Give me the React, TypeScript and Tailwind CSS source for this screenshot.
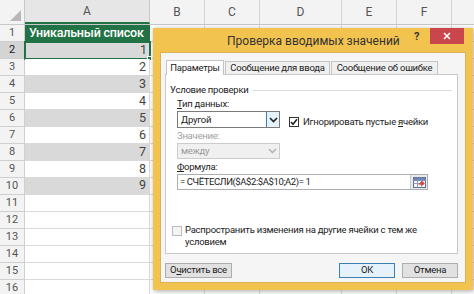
import React from "react";

const rowNums = Array.from({ length: 16 }, (_, i) => i + 1);

const rightCols = [
  { name: "B", cls: "w-[55px]" },
  { name: "C", cls: "w-[55px]" },
  { name: "D", cls: "w-[82px]" },
  { name: "E", cls: "w-[55px]" },
  { name: "F", cls: "w-[55px]" },
  { name: "", cls: "w-[55px]" },
];

function Chevron({ color }: { color: string }) {
  return (
    <svg width="9" height="6" viewBox="0 0 9 6">
      <path d="M1 1 L4.5 4.5 L8 1" fill="none" stroke={color} strokeWidth="1.6" />
    </svg>
  );
}

function CheckBox({ checked }: { checked?: boolean }) {
  return (
    <div className="w-[10px] h-[10px] border border-[#333] bg-white flex items-center justify-center shrink-0">
      {checked && (
        <svg width="8" height="8" viewBox="0 0 8 8">
          <path d="M1 4 L3 6.2 L7 1.3" fill="none" stroke="#222" strokeWidth="1.6" />
        </svg>
      )}
    </div>
  );
}

function PickerIcon() {
  return (
    <svg width="13" height="11" viewBox="0 0 13 11">
      <rect x="0.5" y="0.5" width="12" height="10" fill="#f4f6fa" stroke="#5a6f94" />
      <path d="M0.5 3.5 H12.5 M0.5 6.5 H12.5 M4.5 0.5 V10.5 M8.5 0.5 V10.5" stroke="#8da0c2" strokeWidth="1" />
      <rect x="0.5" y="0.5" width="12" height="3" fill="#6f86b3" />
      <path d="M5 8 L9 4 L11 6 Z" fill="#d9362b" />
      <circle cx="9" cy="6.5" r="2" fill="#e04434" />
    </svg>
  );
}

function Sheet() {
  return (
    <div className="flex flex-col">
      {/* column headers */}
      <div className="flex h-[25px] bg-[#f3f3f3] border-b border-[#c8c8c8] text-[12px] text-[#555]">
        <div className="w-[25px] shrink-0 border-r border-[#c8c8c8] flex items-end justify-end p-[3px]">
          <svg width="11" height="11" viewBox="0 0 11 11">
            <path d="M11 0 L11 11 L0 11 Z" fill="#b7b7b7" />
          </svg>
        </div>
        <div className="w-[125px] shrink-0 bg-[#e6e6e6] border-r border-[#c8c8c8] border-b-2 border-b-[#217346] flex items-center justify-center">
          A
        </div>
        {rightCols.map((c, i) => (
          <div key={i} className={`${c.cls} shrink-0 border-r border-[#d4d4d4] flex items-center justify-center`}>
            {c.name}
          </div>
        ))}
      </div>
      {rowNums.map((n) => {
        const value = n >= 2 && n <= 10 ? n - 1 : null;
        const shaded = n >= 2 && n <= 10 && n % 2 === 0;
        return (
          <div key={n} className="flex h-[17px] shrink-0">
            <div
              className={`w-[25px] shrink-0 border-r border-b border-[#cfcfcf] flex items-center justify-center text-[11px] ${
                n === 2 ? "bg-[#d4d4d4] text-[#222]" : "bg-[#f3f3f3] text-[#555]"
              }`}
            >
              {n}
            </div>
            {n === 1 ? (
              <div className="w-[125px] shrink-0 bg-[#217346] text-white text-[12.5px] font-medium tracking-[-0.2px] whitespace-nowrap flex items-center pl-[4px] border-b border-[#5c9c76]">
                Уникальный список
              </div>
            ) : (
              <div
                className={`relative w-[125px] shrink-0 flex items-center justify-end pr-[3px] text-[12.5px] text-[#444] ${
                  shaded ? "bg-[#d9d9d9]" : "bg-white"
                } ${n === 10 ? "border-b-2 border-[#222]" : "border-b border-[#dadada]"} ${
                  n === 2 ? "outline-2 outline-[#217346] -outline-offset-1" : "border-r border-[#dadada]"
                }`}
              >
                {value}
                {n === 2 && <div className="absolute -right-[2px] -bottom-[3px] w-[5px] h-[5px] bg-[#217346] border border-white" />}
              </div>
            )}
            {rightCols.map((c, i) => (
              <div key={i} className={`${c.cls} shrink-0 border-r border-b border-[#dadada] bg-white`} />
            ))}
          </div>
        );
      })}
    </div>
  );
}

function Dialog() {
  return (
    <div className="absolute left-[153px] top-[28px] w-[320px] h-[262px] bg-[#f3c350] shadow-[1px_1px_5px_rgba(0,0,0,0.35)] flex flex-col whitespace-nowrap">
      {/* title bar */}
      <div className="h-[24px] flex shrink-0">
        <div className="w-[74px] shrink-0" />
        <div className="text-[12px] leading-[27px] text-[#333]">Проверка вводимых значений</div>
        <div className="flex-1" />
        <div className="text-[11px] font-bold leading-[18px] text-[#333] w-[16px]">?</div>
        <div className="w-[34px] h-[16px] bg-[#c9474c] flex items-center justify-center mr-[9px]">
          <svg width="8" height="8" viewBox="0 0 8 8">
            <path d="M1 1 L7 7 M7 1 L1 7" stroke="white" strokeWidth="1.5" />
          </svg>
        </div>
      </div>
      {/* body */}
      <div className="mx-[7px] mb-[7px] flex-1 bg-[#f5f5f5] border border-[#d9b25a] flex flex-col pl-[4px] pr-[7px] pt-[6px] text-[9.5px] tracking-[-0.25px] text-[#222]">
        {/* tabs */}
        <div className="flex items-end h-[15px] pl-[1px]">
          <div className="h-[15px] w-[58px] bg-white border border-b-0 border-[#c4c4c4] flex items-center justify-center relative z-10 -mb-px">
            Параметры
          </div>
          <div className="h-[13px] w-[105px] ml-[1px] bg-[#f0f0f0] border border-b-0 border-[#c4c4c4] flex items-center justify-center">
            Сообщение для ввода
          </div>
          <div className="h-[13px] w-[107px] ml-[1px] bg-[#f0f0f0] border border-b-0 border-[#c4c4c4] flex items-center justify-center">
            Сообщение об ошибке
          </div>
        </div>
        {/* panel */}
        <div className="h-[180px] bg-white border border-[#c9c9c9] flex flex-col pl-[4px] pr-[5px]">
          <div className="mt-[8px] flex items-center h-[14px]">
            <span>Условие проверки</span>
            <div className="flex-1 h-px bg-[#dcdcdc] ml-[4px]" />
          </div>
          <div className="pl-[7px] flex flex-col">
            <div className="h-[14px] leading-[14px]">
              <span className="underline">Т</span>ип данных:
            </div>
            <div className="flex items-start h-[17px]">
              <div className="w-[103px] h-[17px] border border-[#7a7a7a] bg-white flex">
                <div className="flex-1 pl-[3px] leading-[15px]">Другой</div>
                <div className="w-[13px] h-full bg-[#e5f1fb] border-l border-[#3c7fb1] flex items-center justify-center">
                  <Chevron color="#222" />
                </div>
              </div>
              <div className="ml-[9px] mt-[4px] flex items-center gap-[4px]">
                <CheckBox checked />
                <span>
                  Игнорировать пустые <span className="underline">я</span>чейки
                </span>
              </div>
            </div>
            <div className="mt-[1px] h-[14px] leading-[14px] text-[#a0a0a0]">Значение:</div>
            <div className="w-[103px] h-[16px] border border-[#cccccc] bg-[#f0f0f0] flex">
              <div className="flex-1 pl-[3px] leading-[14px] text-[#9a9a9a]">между</div>
              <div className="w-[13px] h-full flex items-center justify-center">
                <Chevron color="#b5b5b5" />
              </div>
            </div>
            <div className="mt-[1px] h-[14px] leading-[14px]">
              <span className="underline">Ф</span>ормула:
            </div>
            <div className="w-[251px] h-[16px] border border-[#abadb3] bg-white flex items-center">
              <div className="flex-1 pl-[2px] leading-[14px] tracking-[-0.4px]">= СЧЁТЕСЛИ($A$2:$A$10;A2)= 1</div>
              <div className="w-[17px] h-[14px] border-l border-[#c9c9c9] bg-[#eaeaea] flex items-center justify-center">
                <PickerIcon />
              </div>
            </div>
          </div>
          <div className="mt-[34px] flex items-start gap-[3px] pl-[2px] leading-[12px]">
            <div className="mt-[2px] w-[10px] h-[10px] border border-[#bcbcbc] bg-[#f4f4f4] shrink-0" />
            <div>
              Распространить изменения на другие ячейки с тем же
              <br />
              условием
            </div>
          </div>
        </div>
        {/* buttons */}
        <div className="mt-[9px] flex items-center h-[15px]">
          <div className="w-[67px] h-[15px] border border-[#adadad] bg-[#e1e1e1] flex items-center justify-center">
            О<span className="underline">ч</span>истить все
          </div>
          <div className="flex-1" />
          <div className="w-[56px] h-[15px] border border-[#3c7fb1] bg-[#e5f1fb] flex items-center justify-center">
            ОК
          </div>
          <div className="ml-[7px] w-[56px] h-[15px] border border-[#adadad] bg-[#e1e1e1] flex items-center justify-center">
            Отмена
          </div>
        </div>
      </div>
    </div>
  );
}

export default function App() {
  return (
    <div className="relative w-[474px] h-[294px] overflow-hidden bg-white font-['Roboto',sans-serif]">
      <Sheet />
      <Dialog />
    </div>
  );
}
